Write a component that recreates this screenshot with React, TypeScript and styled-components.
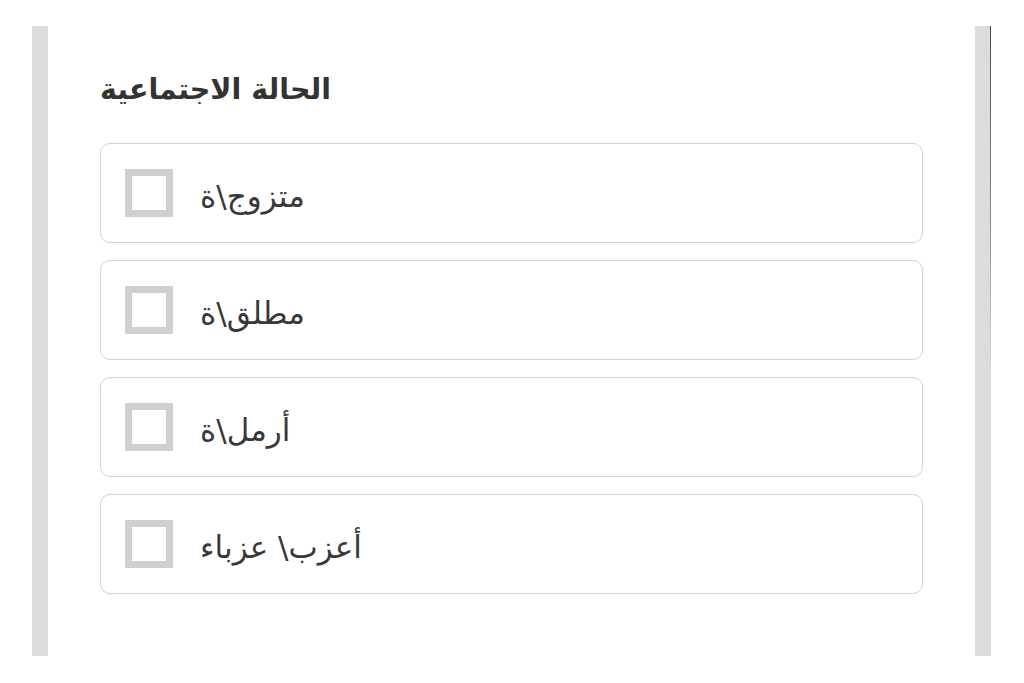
import React from "react";
import styled, { createGlobalStyle } from "styled-components";

const Global = createGlobalStyle`
  html, body { margin: 0; padding: 0; background: #ffffff; }
  body { font-family: "DejaVu Sans", "Noto Sans", sans-serif; }
`;

const Page = styled.div`
  width: 1024px;
  height: 683px;
  padding: 26px 0 0 32px;
  box-sizing: border-box;
  background: #ffffff;
`;

const Panel = styled.section`
  position: relative;
  width: 959px;
  height: 630px;
  box-sizing: border-box;
  border-left: 16px solid #dcdcdc;
  border-right: 16px solid #dcdcdc;
  padding: 47px 52px 0 52px;
  display: flex;
  flex-direction: column;

  /* thin shaded edge along the top of the right rail */
  &::after {
    content: "";
    position: absolute;
    top: 0;
    right: -16px;
    width: 1px;
    height: 350px;
    background: linear-gradient(to bottom, #4a4a4a 0%, #8a8a8a 55%, rgba(220, 220, 220, 0) 100%);
  }
`;

const Heading = styled.h2`
  margin: 0 0 36px 0;
  font-size: 28.5px;
  font-weight: bold;
  color: #333333;
  line-height: 34px;
  text-align: left;
`;

const List = styled.div`
  display: flex;
  flex-direction: column;
  gap: 17px;
`;

const Option = styled.label`
  height: 100px;
  box-sizing: border-box;
  border: 1.5px solid #d2d2d2;
  border-radius: 10px;
  display: flex;
  align-items: center;
  padding-left: 24px;
  gap: 27px;
  cursor: pointer;
`;

const Box = styled.span`
  width: 48px;
  height: 48px;
  box-sizing: border-box;
  border: 7px solid #cfcfcf;
  background: #ffffff;
  flex: none;
`;

const Label = styled.span`
  font-size: 31px;
  color: #383838;
  line-height: 1;
  padding-top: 6px;
`;

const options = ["متزوج\\ة", "مطلق\\ة", "أرمل\\ة", "أعزب\\ عزباء"];

export default function App() {
  return (
    <>
      <Global />
      <Page>
        <Panel>
          <Heading>الحالة الاجتماعية</Heading>
          <List>
            {options.map((o) => (
              <Option key={o}>
                <Box />
                <Label>{o}</Label>
              </Option>
            ))}
          </List>
        </Panel>
      </Page>
    </>
  );
}
